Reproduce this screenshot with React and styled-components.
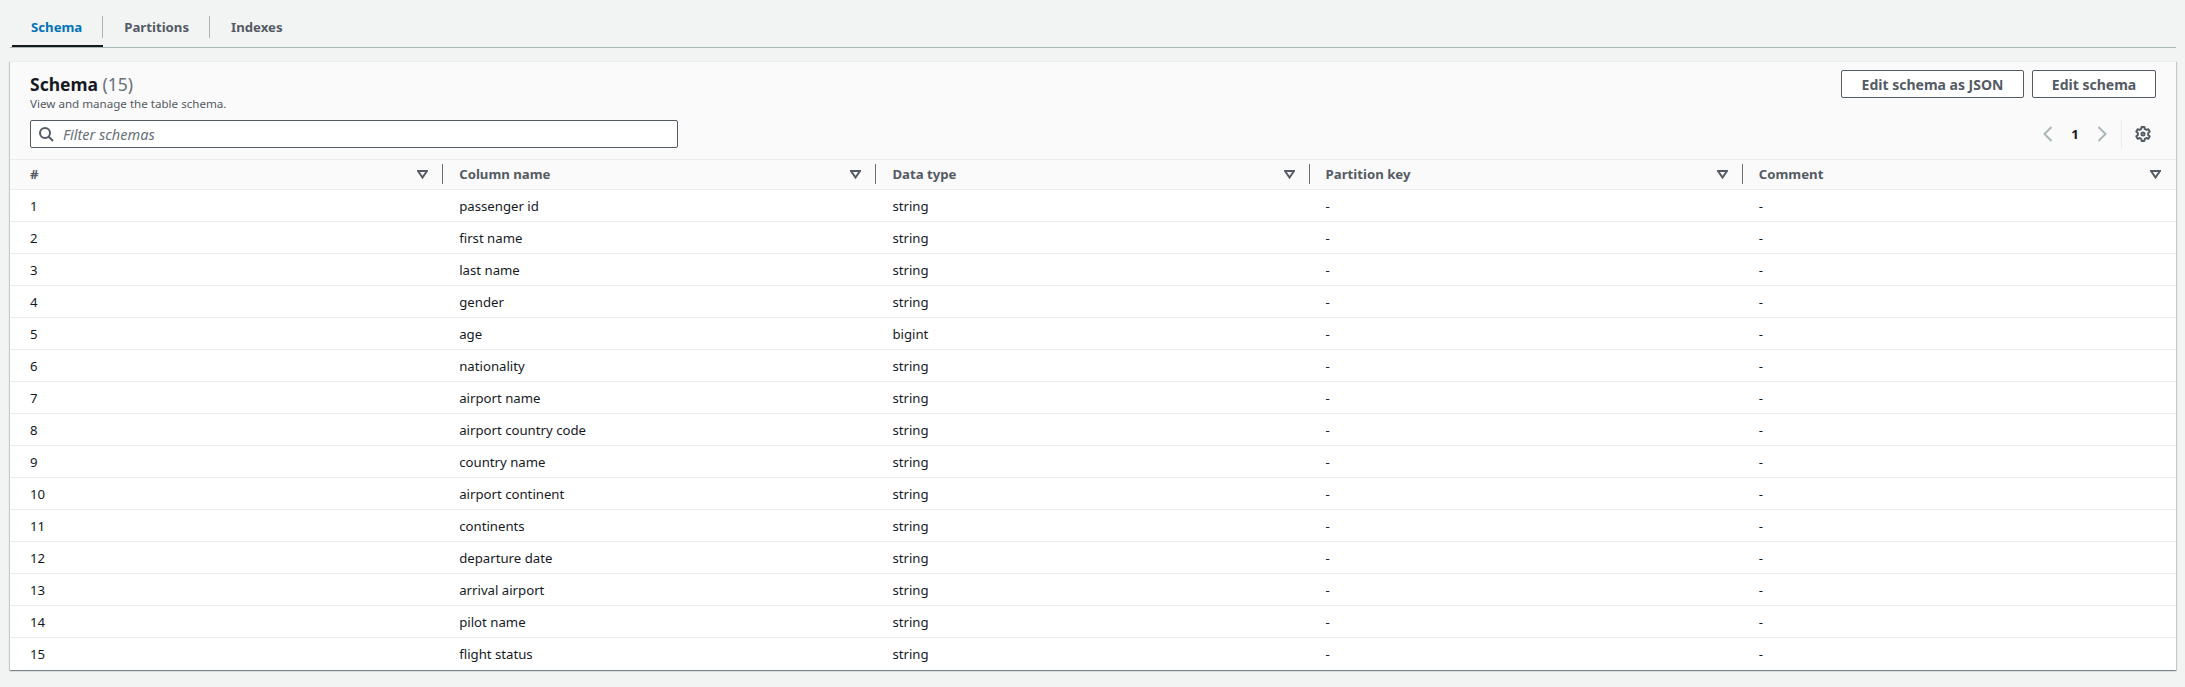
import React from 'react'
import styled, { createGlobalStyle } from 'styled-components'

const columns = ['#', 'Column name', 'Data type', 'Partition key', 'Comment']

const rows = [
  ['passenger id', 'string'],
  ['first name', 'string'],
  ['last name', 'string'],
  ['gender', 'string'],
  ['age', 'bigint'],
  ['nationality', 'string'],
  ['airport name', 'string'],
  ['airport country code', 'string'],
  ['country name', 'string'],
  ['airport continent', 'string'],
  ['continents', 'string'],
  ['departure date', 'string'],
  ['arrival airport', 'string'],
  ['pilot name', 'string'],
  ['flight status', 'string'],
]

const tabs = ['Schema', 'Partitions', 'Indexes']

const GlobalStyle = createGlobalStyle`
  html, body {
    margin: 0;
    background: #f2f3f3;
  }
  body {
    font-family: "Noto Sans", "Liberation Sans", sans-serif;
    color: #16191f;
  }
`

const Page = styled.div`
  width: 2185px;
  height: 687px;
  box-sizing: border-box;
  padding: 10px 9px 0 10px;
  overflow: hidden;
`

const TabBar = styled.div`
  display: flex;
  height: 37px;
  padding-left: 2px;
  border-bottom: 1px solid #aab7b8;
`

const Tab = styled.div`
  height: 37px;
  box-sizing: border-box;
  padding: 6px 0 0;
  ${(p) => p.$active && 'border-bottom: 2px solid #16191f;'}
`

const TabLabel = styled.span`
  height: 22px;
  display: flex;
  align-items: center;
  padding: 0 20px 0 ${(p) => (p.$first ? '19px' : '21px')};
  font-size: 13.2px;
  font-weight: 700;
  color: ${(p) => (p.$active ? '#0073bb' : '#545b64')};
  border-right: ${(p) => (p.$last ? 'none' : '1px solid #aab7b8')};
`

const Card = styled.section`
  margin-top: 13px;
  padding-bottom: 1px;
  background: #fff;
  box-shadow: 0 1px 1px 0 rgba(0, 28, 36, 0.3), 1px 1px 1px 0 rgba(0, 28, 36, 0.15), -1px 1px 1px 0 rgba(0, 28, 36, 0.15);
`

const Header = styled.header`
  background: #fafafa;
  padding: 8px 20px 11px 20px;
  height: 98px;
  box-sizing: border-box;
  display: flex;
  flex-direction: column;
  justify-content: space-between;
  border-top: 1px solid #eaeded;
`

const HeaderTop = styled.div`
  display: flex;
  justify-content: space-between;
  align-items: flex-start;
`

const Heading = styled.div`
  margin-top: 3px;
`

const Title = styled.h2`
  margin: 0;
  font-size: 17.5px;
  line-height: 22px;
  font-weight: 700;
  color: #16191f;
`

const Count = styled.span`
  font-weight: 400;
  color: #687078;
`

const Description = styled.p`
  margin: 1px 0 0;
  font-size: 11.6px;
  line-height: 16px;
  color: #545b64;
`

const Actions = styled.div`
  display: flex;
  gap: 8px;
`

const Button = styled.button`
  height: 28px;
  width: ${(p) => p.$width}px;
  padding: 0;
  font-family: inherit;
  font-size: 14px;
  font-weight: 700;
  color: #545b64;
  background: #fff;
  border: 1px solid #545b64;
  border-radius: 2px;
`

const Tools = styled.div`
  display: flex;
  justify-content: space-between;
  align-items: center;
`

const Filter = styled.div`
  width: 648px;
  height: 28px;
  box-sizing: border-box;
  display: flex;
  align-items: center;
  gap: 9px;
  padding-left: 7px;
  background: #fff;
  border: 1px solid #545b64;
  border-radius: 2px;
  color: #545b64;
`

const Placeholder = styled.span`
  font-size: 14.5px;
  font-style: italic;
  color: #687078;
`

const Pager = styled.div`
  display: flex;
  align-items: center;
  height: 28px;
  margin-right: 5px;
`

const PageNumber = styled.span`
  width: 38px;
  text-align: center;
  font-size: 13.2px;
  font-weight: 700;
  color: #16191f;
`

const PagerRule = styled.span`
  width: 1px;
  height: 28px;
  background: #eaeded;
  margin: 0 13px 0 11px;
`

const Row = styled.div`
  display: grid;
  grid-template-columns: repeat(5, 1fr);
  height: 32px;
  box-sizing: border-box;
  align-items: center;
  font-size: 13.2px;
  border-top: 1px solid #eaeded;
  background: #fff;
`

const HeadRow = styled(Row)`
  height: 30px;
  padding-top: 4px;
  align-items: start;
  background: #fafafa;
`

const HeadCell = styled.div`
  position: relative;
  display: flex;
  align-items: center;
  justify-content: space-between;
  height: 20px;
  padding: 0 15px 0 ${(p) => p.$pad}px;
  font-weight: 700;
  color: #545b64;
  ${(p) =>
    !p.$last &&
    `&::after {
      content: '';
      position: absolute;
      right: 0;
      top: 0;
      width: 1px;
      height: 20px;
      background: #687078;
    }`}
`

const Cell = styled.div`
  padding-left: ${(p) => p.$pad}px;
  color: #16191f;
`

const cellPad = (i) => (i === 0 ? 20 : 16)

const SearchIcon = () => (
  <svg width="16" height="16" viewBox="0 0 16 16" fill="none" stroke="currentColor" strokeWidth="2">
    <circle cx="7" cy="7" r="5" />
    <path d="M10.5 10.5 15 15" />
  </svg>
)

const Chevron = ({ flip }) => (
  <svg width="16" height="16" viewBox="0 0 16 16" fill="none" stroke="#aab7b8" strokeWidth="2">
    <path d={flip ? 'M4.5 1l7 7-7 7' : 'M11.5 1l-7 7 7 7'} />
  </svg>
)

const GearIcon = () => (
  <svg width="16" height="16" viewBox="0 0 16 16" fill="none" stroke="#545b64" strokeWidth="2" strokeLinejoin="round">
    <path d="M6.6 1h2.8l.4 2 1.6.9 1.9-.7 1.4 2.4-1.5 1.4v1.9l1.5 1.4-1.4 2.4-1.9-.7-1.6.9-.4 2H6.6l-.4-2-1.6-.9-1.9.7-1.4-2.4 1.5-1.4V7L1.3 5.6l1.4-2.4 1.9.7 1.6-.9z" />
    <circle cx="8" cy="8" r="1.5" />
  </svg>
)

const FilterIcon = () => (
  <svg width="11" height="9" viewBox="0 0 11 9" fill="none" stroke="#545b64" strokeWidth="2">
    <path d="M1 1h9L5.5 7.5z" />
  </svg>
)

export default function App() {
  return (
    <Page>
      <GlobalStyle />
      <TabBar>
        {tabs.map((tab, i) => (
          <Tab key={tab} $active={i === 0}>
            <TabLabel $active={i === 0} $first={i === 0} $last={i === tabs.length - 1}>
              {tab}
            </TabLabel>
          </Tab>
        ))}
      </TabBar>
      <Card>
        <Header>
          <HeaderTop>
            <Heading>
              <Title>
                Schema <Count>(15)</Count>
              </Title>
              <Description>View and manage the table schema.</Description>
            </Heading>
            <Actions>
              <Button $width={183}>Edit schema as JSON</Button>
              <Button $width={124}>Edit schema</Button>
            </Actions>
          </HeaderTop>
          <Tools>
            <Filter>
              <SearchIcon />
              <Placeholder>Filter schemas</Placeholder>
            </Filter>
            <Pager>
              <Chevron />
              <PageNumber>1</PageNumber>
              <Chevron flip />
              <PagerRule />
              <GearIcon />
            </Pager>
          </Tools>
        </Header>
        <HeadRow>
          {columns.map((col, i) => (
            <HeadCell key={col} $pad={cellPad(i)} $last={i === columns.length - 1}>
              {col}
              <FilterIcon />
            </HeadCell>
          ))}
        </HeadRow>
        {rows.map(([name, type], i) => (
          <Row key={name}>
            <Cell $pad={cellPad(0)}>{i + 1}</Cell>
            <Cell $pad={cellPad(1)}>{name}</Cell>
            <Cell $pad={cellPad(2)}>{type}</Cell>
            <Cell $pad={cellPad(3)}>-</Cell>
            <Cell $pad={cellPad(4)}>-</Cell>
          </Row>
        ))}
      </Card>
    </Page>
  )
}
